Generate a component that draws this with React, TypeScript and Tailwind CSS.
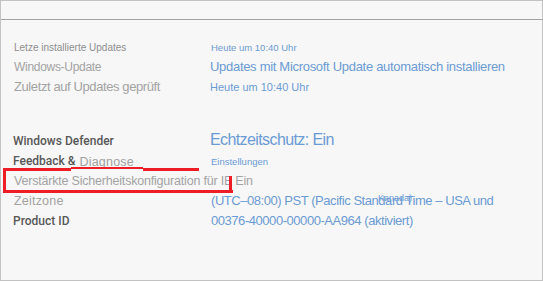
import React from "react";

const blue = "text-[#6b9bd4]";
const strong = "font-['Roboto',sans-serif] font-medium text-[12px] text-[#585858]";

function Row({
  left,
  right,
  extra,
}: {
  left: React.ReactNode;
  right: React.ReactNode;
  extra?: React.ReactNode;
}) {
  return (
    <div className="grid grid-cols-[197px_1fr] h-[20px] items-center">
      <div className="whitespace-nowrap">{left}</div>
      <div className="whitespace-nowrap relative">
        {right}
        {extra}
      </div>
    </div>
  );
}

export default function App() {
  return (
    <div className="w-[543px] h-[281px] bg-[#f7f7f7] border border-[#c2c2c2] relative font-['Liberation_Sans',Arial,sans-serif] overflow-hidden">
      <div className="h-[19px] border-b border-[#a2a2a2]" />
      <div className="pt-[14px] pl-[13px] flex flex-col">
        <Row
          left={<span className="text-[10px] text-[#8e8e8e]">Letze installierte Updates</span>}
          right={<span className={`text-[9.5px] ${blue}`}>Heute um 10:40 Uhr</span>}
        />
        <Row
          left={<span className="text-[12px] text-[#a3a3a3] tracking-[-0.3px]">Windows-Update</span>}
          right={
            <span className={`text-[13px] ${blue} tracking-[-0.3px] -ml-[1px]`}>
              Updates mit Microsoft Update automatisch installieren
            </span>
          }
        />
        <Row
          left={<span className="text-[13px] text-[#a3a3a3] tracking-[-0.4px]">Zuletzt auf Updates geprüft</span>}
          right={<span className={`text-[11px] ${blue} -ml-[1px]`}>Heute um 10:40 Uhr</span>}
        />
        <div className="h-[34px]" />
        <Row
          left={<span className={`${strong} -ml-[1px]`}>Windows Defender</span>}
          right={<span className={`text-[16px] ${blue} tracking-[-0.6px] -ml-[1px]`}>Echtzeitschutz: Ein</span>}
        />
        <Row
          left={
            <span className="-ml-[1px]">
              <span className={strong}>Feedback &amp;</span>
              <span className="text-[12.5px] text-[#a0a0a0] tracking-[0.2px] ml-[4px] relative top-[1px]">Diagnose</span>
            </span>
          }
          right={<span className={`text-[9.5px] ${blue}`}>Einstellungen</span>}
        />
        <Row
          left={
            <span className="text-[12.5px] text-[#a3a3a3] tracking-[-0.2px]">
              Verstärkte Sicherheitskonfiguration für IE Ein
            </span>
          }
          right={null}
        />
        <Row
          left={<span className="text-[12.5px] text-[#a3a3a3] tracking-[0.2px]">Zeitzone</span>}
          right={
            <span className={`text-[13px] ${blue} tracking-[-0.45px]`}>
              (UTC–08:00) PST (Pacific Standard Time – USA und
            </span>
          }
          extra={
            <span className={`absolute left-[167px] top-[4px] text-[9px] ${blue}`}>Kanada)</span>
          }
        />
        <Row
          left={<span className={`${strong} -ml-[1px]`}>Product ID</span>}
          right={<span className={`text-[13px] ${blue} tracking-[-0.45px]`}>00376-40000-00000-AA964 (aktiviert)</span>}
        />
      </div>

      {/* red annotation overlay */}
      <div className="absolute left-[2px] top-[167px] w-[230px] h-[25px] border-l-[3px] border-b-[3px] border-[#ee1c25]" />
      <div className="absolute left-[2px] top-[166px] w-[196px] h-[4px] flex items-start">
        <div className="w-[68px] h-[3px] mt-[1px] bg-[#ee1c25]" />
        <div className="w-[72px] h-[2px] bg-[#ee1c25]" />
        <div className="flex-1 h-[3px] mt-[1px] bg-[#ee1c25]" />
      </div>
      <div className="absolute left-[228px] top-[175px] w-[3px] h-[17px] bg-[#ee1c25]" />
    </div>
  );
}
